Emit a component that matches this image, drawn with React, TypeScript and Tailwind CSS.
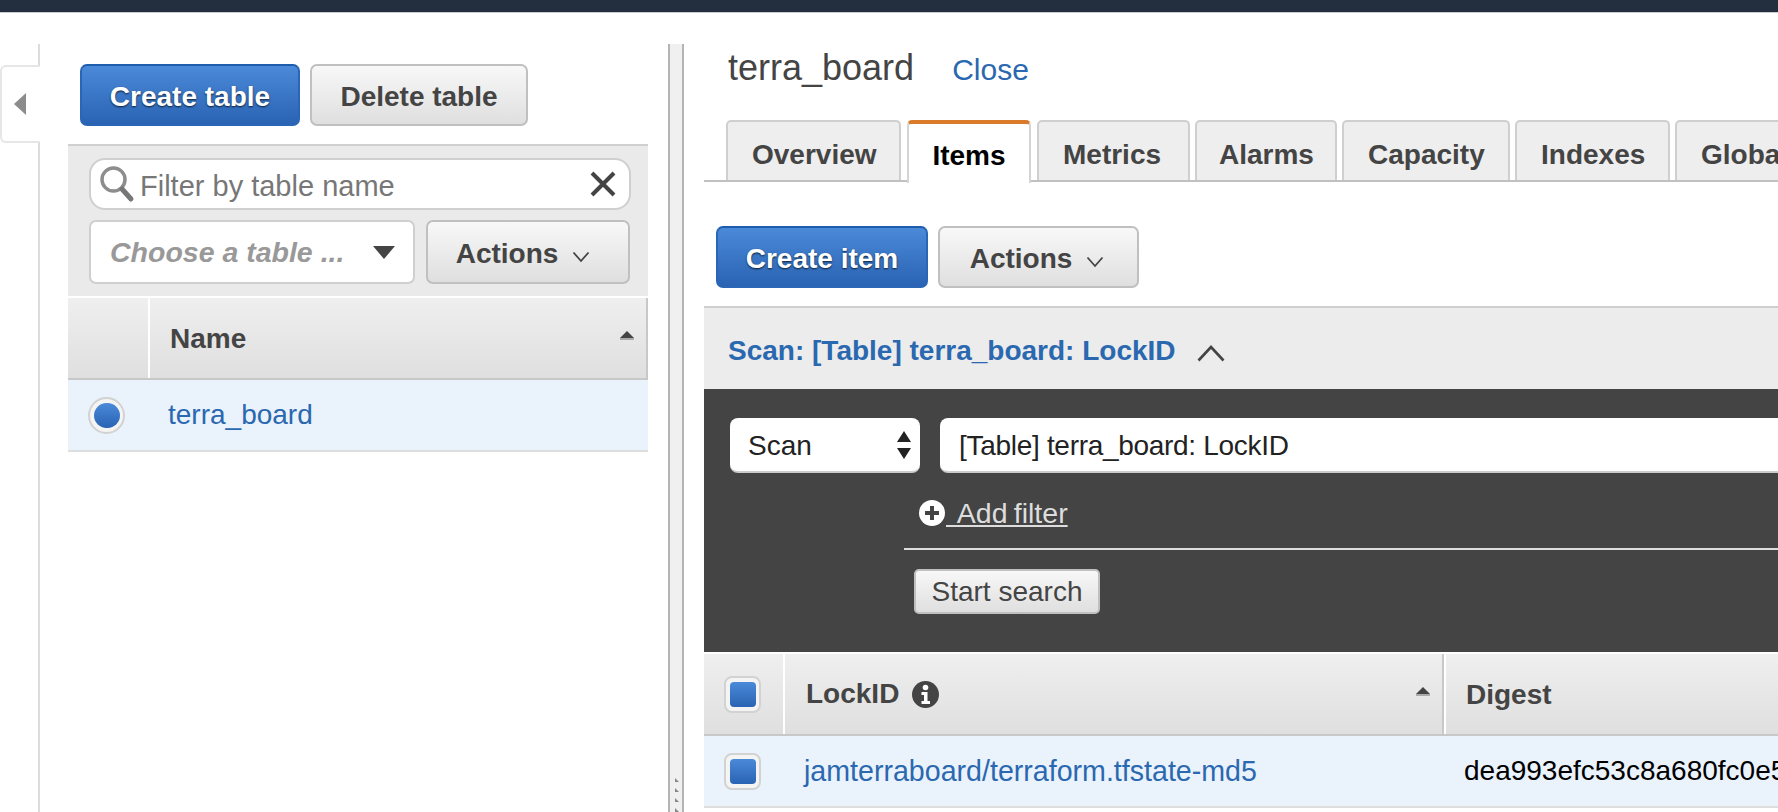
const font = "font-['Liberation_Sans','Arial',sans-serif]";

const blueBtn =
  "flex items-center justify-center rounded-[7px] border-2 border-[#2a66b5] border-t-[#1e5cae] bg-linear-to-b from-[#4b8ad9] to-[#2a63b3] pt-[3px] text-[28px] font-bold text-white [text-shadow:0_1px_2px_rgba(0,0,0,0.75)]";
const grayBtn =
  "flex items-center justify-center rounded-[7px] border-2 border-[#c0c0c0] bg-linear-to-b from-[#f8f8f8] to-[#dfdfdf] pt-[3px] text-[28px] font-bold text-[#444]";

function ChevronDown() {
  return (
    <svg width="18" height="12" viewBox="0 0 18 12" fill="none" className="mt-[7px]">
      <path d="M1.5 1.5 9 10l7.5-8.5" stroke="#444" strokeWidth="1.8" />
    </svg>
  );
}

function SortCaret() {
  return (
    <svg width="14" height="9" viewBox="0 0 14 9" className="shrink-0">
      <path d="M7 0 14 7H0z" fill="#444" />
      <rect x="0" y="7" width="14" height="2" fill="#aaa" />
    </svg>
  );
}

function Check({ round }: { round?: boolean }) {
  return (
    <div
      className={`flex h-[37px] w-[37px] items-center justify-center border-2 border-[#d2d2d2] bg-[#f4f4f4] ${
        round ? "rounded-full" : "rounded-[8px]"
      }`}
    >
      <div
        className={`h-[25px] w-[26px] bg-linear-to-b from-[#4b8ad9] to-[#2a63b3] ${
          round ? "rounded-full" : "rounded-[4px]"
        }`}
      />
    </div>
  );
}

function ActionsButton({ className }: { className: string }) {
  return (
    <button className={`${grayBtn} ${className} gap-[14px]`}>
      Actions
      <ChevronDown />
    </button>
  );
}

function LeftPanel() {
  return (
    <div className="ml-[28px] w-[580px] shrink-0 pt-[20px]">
      <div className="flex gap-[10px] pl-[12px]">
        <button className={`${blueBtn} h-[62px] w-[220px]`}>Create table</button>
        <button className={`${grayBtn} h-[62px] w-[218px]`}>Delete table</button>
      </div>

      <div className="mt-[18px] border-t-2 border-[#d0d0d0] bg-[#eaeaea] pb-[12px] pl-[21px] pr-[17px] pt-[12px]">
        <div className="flex h-[52px] items-center rounded-[16px] border-2 border-[#cfcfcf] bg-white pl-[8px] pr-[12px]">
          <svg width="36" height="38" viewBox="0 0 36 38" fill="none" className="shrink-0">
            <circle cx="14.5" cy="14.5" r="11.5" stroke="#8d8d8d" strokeWidth="3.5" fill="#fff" />
            <path d="M23 24l9 10" stroke="#777" strokeWidth="5" strokeLinecap="round" />
          </svg>
          <span className="ml-[5px] flex-1 pt-[5px] text-[29px] text-[#777]">Filter by table name</span>
          <svg width="28" height="28" viewBox="0 0 28 28" fill="none">
            <path d="M3 3l22 22M25 3 3 25" stroke="#444" strokeWidth="4" />
          </svg>
        </div>
        <div className="mt-[10px] flex gap-[11px]">
          <div className="flex h-[64px] w-[326px] items-center justify-between rounded-[7px] border-2 border-[#cfcfcf] bg-white pl-[19px] pr-[18px]">
            <span className="text-[28.5px] font-bold italic text-[#999]">Choose a table ...</span>
            <svg width="22" height="13" viewBox="0 0 22 13">
              <path d="M0 0h22L11 13z" fill="#444" />
            </svg>
          </div>
          <ActionsButton className="h-[64px] w-[204px] pr-[10px]" />
        </div>
      </div>

      <div className="mt-[2px] flex h-[82px] border-b-2 border-[#c8c8c8] bg-linear-to-b from-[#efefef] to-[#dfdfdf]">
        <div className="w-[82px] shrink-0 border-r-2 border-white" />
        <div className="flex flex-1 items-center justify-between border-r-2 border-[#c8c8c8] pl-[20px] pr-[12px]">
          <span className="pt-[1px] text-[28px] font-bold text-[#444]">Name</span>
          <div className="-mt-[5px]">
            <SortCaret />
          </div>
        </div>
      </div>
      <div className="flex h-[72px] items-center border-b-2 border-[#dedede] bg-[#eaf2fb]">
        <div className="ml-[20px]">
          <Check round />
        </div>
        <a className="ml-[43px] text-[28px] text-[#2a68b0]">terra_board</a>
      </div>
    </div>
  );
}

function Splitter() {
  return (
    <div className="relative ml-[20px] h-full w-[16px] shrink-0 border-x-2 border-x-[#b4b4b4] bg-[#f0f0f0]">
      <div className="absolute bottom-0 left-[5px] flex flex-col gap-[6px]">
        {[0, 1, 2, 3].map((i) => (
          <svg key={i} width="4" height="4" viewBox="0 0 4 4">
            <path d="M0 0 4 4H0z" fill="#888" />
          </svg>
        ))}
      </div>
    </div>
  );
}

const tabs = [
  { label: "Overview", width: "w-[175px]", pad: "pl-[24px]" },
  { label: "Items", width: "w-[124px]", active: true },
  { label: "Metrics", width: "w-[153px]", pad: "pl-[24px]" },
  { label: "Alarms", width: "w-[142px]", pad: "pl-[22px]" },
  { label: "Capacity", width: "w-[168px]", pad: "pl-[24px]" },
  { label: "Indexes", width: "w-[155px]", pad: "pl-[24px]" },
  { label: "Global Secondary Indexes", width: "w-[300px]", pad: "pl-[24px]" },
];

function Tabs() {
  return (
    <div className="mt-[28px] flex h-[62px] gap-[5px] border-b-2 border-[#c0c0c0] pl-[22px]">
      {tabs.map((tab) =>
        tab.active ? (
          <div
            key={tab.label}
            className={`${tab.width} ml-[1px] mr-[1px] flex h-[63px] shrink-0 items-center justify-center rounded-t-[5px] border-x-2 border-t-4 border-x-[#d5d5d5] border-t-[#d97b2b] bg-white pt-[5px] text-[28px] font-bold text-black`}
          >
            {tab.label}
          </div>
        ) : (
          <div
            key={tab.label}
            className={`${tab.width} ${tab.pad} h-[60px] shrink-0 rounded-t-[5px] border-x-2 border-t-2 border-[#cfcfcf] bg-[#eeeeee] pt-[12px] text-[28px] font-bold text-[#444] whitespace-nowrap`}
          >
            {tab.label}
          </div>
        ),
      )}
    </div>
  );
}

function ScanPanel() {
  return (
    <div className="h-[263px] bg-[#444] pl-[26px] pt-[29px]">
      <div className="flex gap-[20px]">
        <div className="flex h-[55px] w-[190px] items-center justify-between rounded-[8px] border-b-2 border-[#ccc] bg-white pl-[18px] pr-[8px] pt-[3px] text-[28px] text-[#222]">
          Scan
          <svg width="16" height="28" viewBox="0 0 16 28" className="-mt-[3px]">
            <path d="M8 0l7 11H1zM8 28 1 17h14z" fill="#222" />
          </svg>
        </div>
        <div className="flex h-[55px] flex-1 items-center rounded-l-[8px] border-b-2 border-[#ccc] bg-white pl-[19px] pt-[3px] text-[28px] tracking-[-0.3px] text-[#222]">
          [Table] terra_board: LockID
        </div>
      </div>
      <div className="mt-[24px] flex items-center pl-[188px]">
        <svg width="28" height="28" viewBox="0 0 28 28" className="shrink-0">
          <circle cx="14" cy="14" r="13" fill="#fff" />
          <path d="M14 7v14M7 14h14" stroke="#444" strokeWidth="4" />
        </svg>
        <a className="text-[28.5px] leading-[32px] text-[#ddd] underline whitespace-pre [word-spacing:-1.7px]">  Add filter</a>
      </div>
      <div className="ml-[174px] mt-[19px] h-[2px] bg-[#ddd]" />
      <button className="ml-[184px] mt-[19px] flex h-[45px] w-[186px] items-center justify-center rounded-[5px] border-2 border-[#c0c0c0] bg-linear-to-b from-[#f8f8f8] to-[#dfdfdf] text-[28px] text-[#444]">
        Start search
      </button>
    </div>
  );
}

function ItemsTable() {
  return (
    <>
      <div className="mt-[2px] flex h-[82px] border-b-2 border-[#c8c8c8] bg-linear-to-b from-[#efefef] to-[#dfdfdf]">
        <div className="flex w-[81px] shrink-0 items-center border-r-2 border-white pl-[20px]">
          <Check />
        </div>
        <div className="flex w-[659px] shrink-0 items-center justify-between border-r-2 border-[#c8c8c8] pl-[21px] pr-[12px]">
          <div className="flex items-center gap-[13px] text-[28px] font-bold text-[#444]">
            LockID
            <svg width="27" height="27" viewBox="0 0 27 27" className="shrink-0">
              <circle cx="13.5" cy="13.5" r="13.5" fill="#444" />
              <circle cx="13.5" cy="6.5" r="2.8" fill="#fff" />
              <path d="M9.5 11h6v9h2.5v3H9.5v-3H12v-6H9.5z" fill="#fff" />
            </svg>
          </div>
          <div className="-mt-[5px]">
            <SortCaret />
          </div>
        </div>
        <div className="flex flex-1 items-center border-l-2 border-white pl-[20px] pt-[2px] text-[28px] font-bold text-[#444]">
          Digest
        </div>
      </div>
      <div className="flex h-[72px] items-center border-b-2 border-[#dedede] bg-[#eaf2fb]">
        <div className="w-[100px] shrink-0 pl-[20px]">
          <Check />
        </div>
        <a className="w-[660px] shrink-0 text-[28.6px] text-[#2a68b0]">jamterraboard/terraform.tfstate-md5</a>
        <span className="text-[28px] text-black whitespace-nowrap">dea993efc53c8a680fc0e5a3b2d4</span>
      </div>
    </>
  );
}

function RightPanel() {
  return (
    <div className="ml-[20px] min-w-0 flex-1 overflow-hidden">
      <div className="flex items-baseline pl-[24px] pt-[3px]">
        <h1 className="text-[36px] leading-[42px] text-[#444]">terra_board</h1>
        <a className="ml-[38px] text-[30px] text-[#2a68b0]">Close</a>
      </div>
      <Tabs />
      <div className="mt-[44px] flex gap-[10px] pl-[12px]">
        <button className={`${blueBtn} h-[62px] w-[212px]`}>Create item</button>
        <ActionsButton className="h-[62px] w-[201px] pr-[3px]" />
      </div>
      <div className="mt-[18px] flex h-[83px] items-center gap-[21px] border-t-2 border-[#cfcfcf] bg-[#ececec] pl-[24px] pt-[5px]">
        <span className="text-[28px] font-bold text-[#2a68b0]">Scan: [Table] terra_board: LockID</span>
        <svg width="28" height="18" viewBox="0 0 28 18" fill="none" className="mt-[3px]">
          <path d="M1.5 16.5 14 3l12.5 13.5" stroke="#444" strokeWidth="2.6" />
        </svg>
      </div>
      <ScanPanel />
      <ItemsTable />
    </div>
  );
}

export default function App() {
  return (
    <div className={`${font} flex h-[812px] w-[1778px] flex-col overflow-hidden bg-white`}>
      <div className="h-[13px] shrink-0 border-b border-[#c9ccd0] bg-[#232f3e]" />
      <div className="flex min-h-0 flex-1 pt-[31px]">
        <div className="relative w-[40px] shrink-0 border-r-2 border-[#dcdcdc]">
          <div className="absolute left-0 top-[21px] flex h-[78px] w-[40px] items-center rounded-l-[6px] border-y-2 border-l-2 border-[#e6e6e6] bg-white pl-[12px]">
            <svg width="12" height="22" viewBox="0 0 12 22">
              <path d="M12 0v22L0 11z" fill="#8c8c8c" />
            </svg>
          </div>
        </div>
        <LeftPanel />
        <Splitter />
        <RightPanel />
      </div>
    </div>
  );
}
